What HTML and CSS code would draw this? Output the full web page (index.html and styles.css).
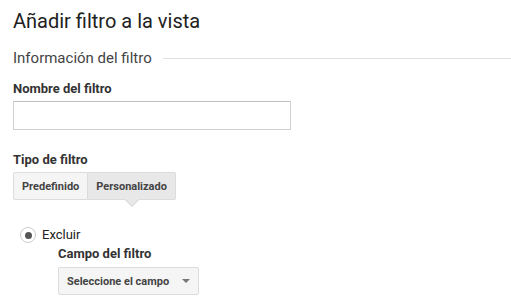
FILE: index.html
```html
<!DOCTYPE html>
<html lang="es">
<head>
    <meta charset="UTF-8">
    <title>Añadir filtro a la vista</title>
    <link rel="stylesheet" href="styles.css">
</head>
<body>

<!-- Título -->
<h1 class="page-title">Añadir filtro a la vista</h1>

<!-- Información del filtro -->
<div class="section-head">
    <span>Información del filtro</span>
    <div class="section-line"></div>
</div>

<div class="field field-name">
    <label class="field-label" for="filter-name">Nombre del filtro</label>
    <input class="text-input" type="text" id="filter-name">
</div>

<div class="field field-type">
    <div class="field-label">Tipo de filtro</div>
    <div class="toggle">
        <button class="toggle-btn">Predefinido</button>
        <button class="toggle-btn active">Personalizado</button>
    </div>
</div>

<!-- Opciones personalizadas -->
<div class="custom-options">
    <label class="radio-row">
        <span class="radio"><span class="radio-dot"></span></span>
        Excluir
    </label>
    <div class="sub-field">
        <div class="field-label">Campo del filtro</div>
        <button class="select-btn">
            Seleccione el campo
            <span class="caret"></span>
        </button>
    </div>
</div>

</body>
</html>
```

FILE: styles.css
```css
/* Página general */
body {
    font-family: Roboto, 'Liberation Sans', sans-serif;
    background-color: #fff;
    color: #222;
    margin: 0;
    padding: 0 0 0 13px;
}

/* Título */
.page-title {
    font-size: 20px;
    font-weight: 400;
    color: #212121;
    margin: 0;
    padding-top: 9px;
    line-height: 24px;
}

/* Cabecera de sección */
.section-head {
    display: flex;
    align-items: center;
    margin-top: 16px;
    font-size: 15px;
    color: #444;
    line-height: 18px;
}

.section-line {
    flex: 1;
    height: 1px;
    background-color: #e0e0e0;
    margin-left: 11px;
    margin-top: 1px;
}

.field-name {
    margin-top: 14px;
}

.field-type {
    margin-top: 22px;
}

.field-label {
    display: block;
    font-size: 13px;
    font-weight: bold;
    color: #333;
    line-height: 15px;
}

.text-input {
    display: block;
    box-sizing: border-box;
    width: 278px;
    height: 29px;
    margin-top: 5px;
    border: 1px solid #d0d0d0;
    border-top-color: #c0c0c0;
    border-radius: 1px;
    padding: 0 6px;
}

/* Botones de tipo de filtro */
.toggle {
    display: flex;
    margin-top: 5px;
}

.toggle-btn {
    position: relative;
    font-family: Roboto, 'Liberation Sans', sans-serif;
    font-size: 11px;
    font-weight: bold;
    color: #444;
    background-color: #f5f5f5;
    border: 1px solid #dcdcdc;
    height: 28px;
    padding: 0 8px;
    border-radius: 2px 0 0 2px;
}

.toggle-btn.active {
    background-color: #e8e8e8;
    border-left: none;
    border-radius: 0 2px 2px 0;
}

/* Flecha bajo el botón activo */
.toggle-btn.active::after {
    content: "";
    position: absolute;
    left: 50%;
    bottom: -7px;
    margin-left: -7px;
    border-left: 7px solid transparent;
    border-right: 7px solid transparent;
    border-top: 7px solid #e8e8e8;
    filter: drop-shadow(0 1px 0 #d0d0d0);
}

.custom-options {
    margin-top: 27px;
    padding-left: 7px;
}

.radio-row {
    display: flex;
    align-items: center;
    font-size: 13px;
    color: #222;
    line-height: 16px;
}

.radio {
    display: flex;
    align-items: center;
    justify-content: center;
    box-sizing: border-box;
    width: 16px;
    height: 16px;
    border: 1px solid #ccc;
    border-radius: 50%;
    margin-right: 6px;
}

.radio-dot {
    width: 7px;
    height: 7px;
    border-radius: 50%;
    background-color: #555;
}

.sub-field {
    padding-left: 38px;
    margin-top: 3px;
}

/* Desplegable */
.select-btn {
    display: flex;
    align-items: center;
    justify-content: space-between;
    margin-top: 6px;
    width: 141px;
    height: 28px;
    padding: 0 8px 0 8px;
    font-family: Roboto, 'Liberation Sans', sans-serif;
    font-size: 11px;
    font-weight: bold;
    color: #444;
    background-color: #f5f5f5;
    border: 1px solid #dcdcdc;
    border-radius: 2px;
}

.caret {
    width: 0;
    height: 0;
    border-left: 4px solid transparent;
    border-right: 4px solid transparent;
    border-top: 4px solid #777;
}
```
